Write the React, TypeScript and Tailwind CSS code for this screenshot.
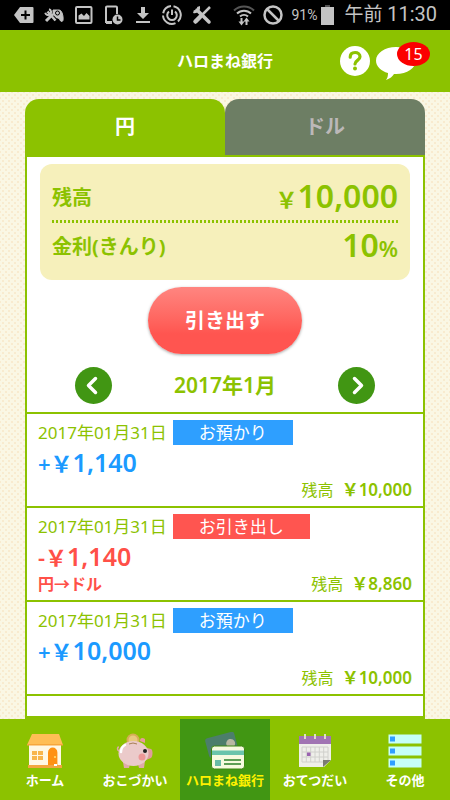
import type { ReactNode } from 'react'
import clsx from 'clsx'

type Entry = {
  date: string
  kind: 'in' | 'out'
  label: string
  amount: string
  note?: string
  balance: string
}

const entries: Entry[] = [
  { date: '2017年01月31日', kind: 'in', label: 'お預かり', amount: '1,140', balance: '10,000' },
  { date: '2017年01月31日', kind: 'out', label: 'お引き出し', amount: '1,140', note: '円→ドル', balance: '8,860' },
  { date: '2017年01月31日', kind: 'in', label: 'お預かり', amount: '10,000', balance: '10,000' },
]

function StatusBar() {
  return (
    <div className="flex h-[30px] items-center justify-between bg-black pr-[13px] pl-[14px] font-['Roboto','Noto_Sans_CJK_JP',sans-serif] text-[#c4c4c4]">
      <div className="flex items-center gap-[10px]">
        {/* tag with plus */}
        <svg width="20" height="18" viewBox="0 0 20 18">
          <path d="M6 1h12.5a1 1 0 0 1 1 1v14a1 1 0 0 1-1 1H6L0 9z" fill="currentColor" />
          <path d="M11.500 4.500v9M7 9h9" stroke="#000" strokeWidth="2" />
        </svg>
        {/* game pad with tools */}
        <svg width="20" height="18" viewBox="0 0 20 18" fill="none" stroke="currentColor">
          <path d="M9 4h6c2 0 3 2 3.700 5s.8 6.500-1 6.500-2-3.500-4-3.500H9z" fill="currentColor" />
          <circle cx="13.500" cy="7" r="2" stroke="#000" />
          <path d="M3 5.500l9 9.500" stroke="#000" strokeWidth="4.500" />
          <path d="M3.500 5.500l8 9" strokeWidth="2.500" />
          <path d="M2 15l7-7" strokeWidth="3" />
          <path d="M5 3.200a3 3 0 1 1-3.800 3.600" strokeWidth="2" />
        </svg>
        {/* picture */}
        <svg width="20" height="20" viewBox="0 0 20 20">
          <rect x="2" y="2" width="15.500" height="16" rx="1" fill="none" stroke="currentColor" strokeWidth="2" />
          <path d="M4.500 14.500v-4l3-2 2.500 2.500 2.500-3 3 3v3.500z" fill="currentColor" />
        </svg>
        {/* device with clock */}
        <svg width="20" height="20" viewBox="0 0 20 20" fill="none" stroke="currentColor">
          <path d="M13 9V2.500a1 1 0 0 0-1-1H3a1 1 0 0 0-1 1V17h6" strokeWidth="2" />
          <path d="M2 17.500h6" strokeWidth="3" />
          <circle cx="13.500" cy="14.500" r="5" fill="currentColor" stroke="none" />
          <path d="M13.500 11.500v3.500h3" stroke="#000" strokeWidth="1.500" />
        </svg>
        {/* download */}
        <svg width="18" height="18" viewBox="0 0 18 18" fill="currentColor">
          <path d="M7 1h4v6h4l-6 6-6-6h4zM2 15h14v2H2z" />
        </svg>
        {/* power ring */}
        <svg width="20" height="20" viewBox="0 0 20 20" fill="none" stroke="currentColor" strokeWidth="2">
          <path d="M11.500 1.200A9 9 0 0 1 16 16.500M13.500 18.200A9 9 0 0 1 1 10.500M1.200 8.200A9 9 0 0 1 9 1" />
          <path d="M7 6.500a4.800 4.800 0 1 0 6 0M10 4.500V10" />
        </svg>
        {/* wrench and screwdriver */}
        <svg width="20" height="20" viewBox="0 0 20 20" fill="none" stroke="currentColor">
          <path d="M5 5l12 12" strokeWidth="3.500" strokeLinecap="round" />
          <path d="M6.500 1.500a4 4 0 0 1-5 5" strokeWidth="3" />
          <path d="M18 2L9 11" strokeWidth="2.500" />
          <path d="M8 12L3.500 16.500" strokeWidth="4.500" strokeLinecap="round" />
        </svg>
      </div>
      <div className="flex items-center">
        <svg className="mr-2" width="22" height="22" viewBox="0 0 22 22" fill="none" stroke="currentColor" strokeWidth="2">
          <path d="M1 6.500a14.500 14.500 0 0 1 20 0" stroke="#555" />
          <path d="M4 9.500a10 10 0 0 1 14 0M7 12.500a6 6 0 0 1 8 0" />
          <path d="M8.500 14v5M13.500 21v-5" />
          <path d="M5.500 17.500h6l-3 4zM10.500 17.500h6l-3-4z" fill="currentColor" stroke="none" />
        </svg>
        <svg className="mr-2" width="20" height="20" viewBox="0 0 20 20" fill="none" stroke="currentColor" strokeWidth="2.500">
          <circle cx="10" cy="10" r="8.500" />
          <path d="M4 4l12 12" />
        </svg>
        <span className="mr-1 text-sm">91%</span>
        <svg className="mr-[10px]" width="13" height="20" viewBox="0 0 13 20">
          <path d="M4 0h5v3H4z" fill="#555" />
          <path d="M0 2h13v18H0z" fill="currentColor" />
        </svg>
        <span className="text-[19px] leading-[30px] whitespace-nowrap">午前 <span className="text-xl">11:30</span></span>
      </div>
    </div>
  )
}

function Header() {
  return (
    <header className="relative flex h-[62px] items-center justify-center bg-[#8cc200]">
      <h1 className="text-base font-bold text-white">ハロまね銀行</h1>
      <div className="absolute top-3 right-5 flex gap-[6px]">
        <button aria-label="ヘルプ" className="mt-1 size-[30px]">
          <svg width="30" height="30" viewBox="0 0 30 30">
            <circle cx="15" cy="15" r="15" fill="#fff" />
            <path d="M10.200 11.200c0-3.200 2-4.700 4.900-4.700 2.800 0 4.900 1.600 4.900 4.200 0 3.600-5 3.700-5 7.300" fill="none" stroke="#8cc200" strokeWidth="3.200" strokeLinecap="round" />
            <circle cx="15" cy="22.500" r="2" fill="#8cc200" />
          </svg>
        </button>
        <button aria-label="お知らせ 15" className="relative h-10 w-[54px]">
          <svg width="40" height="34" viewBox="0 0 40 34" className="mt-1">
            <path d="M20 0C9 0 0 6 0 13.500c0 6 5 10.500 12 12.500 0 3-.5 5-2 7 4-1.500 6.500-3.500 8-6h2c11 0 20-6 20-13.500S31 0 20 0z" fill="#fff" />
          </svg>
          <span className="absolute top-0 right-0 flex h-6 w-[33px] items-center justify-center rounded-[50%] bg-[#fb0000] text-base text-white">15</span>
        </button>
      </div>
    </header>
  )
}

function Tabs() {
  return (
    <div role="tablist" className="grid h-14 grid-cols-2 text-xl font-bold">
      <button role="tab" aria-selected="true" className="rounded-t-[14px] bg-[#8cc200] text-white">円</button>
      <button role="tab" aria-selected="false" className="rounded-t-[14px] bg-[#6d7e64] text-[#bcb8b8]">ドル</button>
    </div>
  )
}

function Summary() {
  return (
    <dl className="mx-[13px] mt-[7px] h-[116px] rounded-xl bg-[#f6f0bb] px-3 pt-3">
      <div className="flex h-11 items-center justify-between">
        <dt className="text-xl font-bold">残高</dt>
        <dd className="pb-[2px] text-[32px] leading-10 font-semibold"><span className="text-[22px]">￥</span>10,000</dd>
      </div>
      <svg className="block h-[3px] w-full" aria-hidden="true">
        <line x1="0" y1="1.500" x2="100%" y2="1.500" stroke="#8cc200" strokeWidth="3" strokeDasharray="2 2" />
      </svg>
      <div className="flex h-12 items-center justify-between">
        <dt className="text-xl font-bold">金利(きんり)</dt>
        <dd className="pb-[2px] text-[32px] leading-10 font-semibold">10<span className="text-[22px]">%</span></dd>
      </div>
    </dl>
  )
}

function MonthButton({ label, d }: { label: string; d: string }) {
  return (
    <button aria-label={label} className="flex size-[37px] items-center justify-center rounded-full bg-[#419613]">
      <svg width="37" height="37" viewBox="0 0 37 37" fill="none" stroke="#fff" strokeWidth="3.500" strokeLinecap="round" strokeLinejoin="round">
        <path d={d} />
      </svg>
    </button>
  )
}

function EntryRow({ entry }: { entry: Entry }) {
  const isIn = entry.kind === 'in'
  return (
    <li className="h-[94px] border-b-2 border-[#8cc200] px-[11px] pt-[6px]">
      <div className="flex items-center gap-[6px] text-[17px] leading-[25px]">
        <time>{entry.date}</time>
        <span className={clsx('px-[26px] text-white', isIn ? 'bg-[#2e9fff]' : 'bg-[#ff5550]')}>{entry.label}</span>
      </div>
      <p className={clsx('text-[25px] leading-[34px] font-semibold', isIn ? 'text-[#1b9aff]' : 'text-[#ff5048]')}>
        <span className="text-[22px]">{isIn ? '+' : '-'}￥</span>{entry.amount}
      </p>
      <div className="flex items-center justify-between text-base leading-5">
        <span className="font-bold text-[#ff5048]">{entry.note}</span>
        <span>残高<b className="ml-2 text-[17px] font-semibold">￥{entry.balance}</b></span>
      </div>
    </li>
  )
}

function HomeIcon() {
  return (
    <svg width="38" height="36" viewBox="0 0 38 36">
      <path d="M3 12h32v21H3z" fill="#fff8e4" />
      <path d="M6 1h27l4 11H1z" fill="#ffbe55" />
      <path d="M1 11h36v1.500H1z" fill="#f6a63c" />
      <path d="M6 18h11v9H6z" fill="#f8b64c" />
      <path d="M11.500 18v9M6 22.500h11" stroke="#fff8e4" />
      <path d="M22 32V19.500a4.700 5 0 0 1 9.400 0V32z" fill="#ff9113" />
      <circle cx="29" cy="24" r="1" fill="#ffe070" />
      <path d="M2 32h34v3H2z" fill="#f3a63d" />
      <path d="M28 31h3v2h-3z" fill="#fff" />
    </svg>
  )
}

function PigIcon() {
  return (
    <svg width="38" height="36" viewBox="0 0 38 36">
      <circle cx="17" cy="7" r="6.500" fill="#d6ad56" />
      <circle cx="17" cy="7" r="4.500" fill="#e8c980" />
      <path d="M3 18c-2-1-2-4 0-4" fill="none" stroke="#dfa9a6" strokeWidth="1.500" />
      <path d="M7 29l1 6h5l1-4h8l1 4h5l1-7z" fill="#dfabaa" />
      <path d="M24 8c0-3 2-4 5-2v4z" fill="#e89b9c" />
      <path d="M31 15l4 1c2 1 2 7 0 9l-5 2z" fill="#df9c9c" />
      <ellipse cx="17.500" cy="20.500" rx="15" ry="12.500" fill="#ebcaca" />
      <path d="M5 19c0-3 2-6 4-7" stroke="#fff" strokeWidth="2.500" strokeLinecap="round" fill="none" />
      <circle cx="26" cy="24" r="3.500" fill="#ed9797" />
      <circle cx="29" cy="18" r="2" fill="#222" />
      <path d="M13 11q4-2 8 0" stroke="#a87f55" fill="none" />
    </svg>
  )
}

function CardsIcon() {
  return (
    <svg width="42" height="38" viewBox="0 0 42 38">
      <g transform="rotate(-15 17 14)">
        <rect x="3" y="3" width="30" height="20" rx="2.500" fill="#4c7e6b" />
        <circle cx="27" cy="14" r="4.500" fill="#b8b8a2" />
      </g>
      <rect x="7.500" y="14" width="33" height="23" rx="3" fill="#f7fadf" stroke="#3c8612" />
      <path d="M8 18.500h32v4.500H8z" fill="#6ac4ab" />
      <rect x="11" y="28" width="6" height="6" fill="#68bba6" />
      <path d="M20 28h17M20 32h17" stroke="#2c8028" strokeWidth="1.500" />
    </svg>
  )
}

function CalendarIcon() {
  return (
    <svg width="34" height="34" viewBox="0 0 34 34">
      <path d="M1 2h32v24l-7 7H1z" fill="#efefea" />
      <path d="M1 2h32v8H1z" fill="#a174b3" />
      <path d="M7 0v5M17 0v5M27 0v5" stroke="#dcdcc8" strokeWidth="2" />
      <path d="M4 13h26v15H4zM4 18h26M4 23h26M8.300 13v15M12.700 13v15M17 13v15M21.300 13v15M25.700 13v15" fill="none" stroke="#d0d0cc" />
      <path d="M9 18.500h3.500v3.500H9z" fill="#9a62b0" />
      <path d="M25 33v-7h8z" fill="#7b7b73" />
    </svg>
  )
}

function ListIcon() {
  return (
    <svg width="34" height="34" viewBox="0 0 34 34">
      {[0.5, 12.5, 24.5].map((y) => (
        <g key={y}>
          <rect x="0.500" y={y} width="33" height="9" fill="#c6fff8" />
          <rect x="2" y={y + 2} width="5" height="5" fill="#2f9fff" />
        </g>
      ))}
    </svg>
  )
}

const navItems: { label: string; icon: ReactNode; active?: boolean }[] = [
  { label: 'ホーム', icon: <HomeIcon /> },
  { label: 'おこづかい', icon: <PigIcon /> },
  { label: 'ハロまね銀行', icon: <CardsIcon />, active: true },
  { label: 'おてつだい', icon: <CalendarIcon /> },
  { label: 'その他', icon: <ListIcon /> },
]

function BottomNav() {
  return (
    <nav className="grid grid-cols-5 bg-[#8cc200]">
      {navItems.map((item) => (
        <a
          key={item.label}
          href="#"
          className={clsx(
            'flex h-[81px] flex-col items-center pt-[13px] text-[13px] leading-5 font-bold whitespace-nowrap',
            item.active ? 'bg-[#419613] text-[#fff100]' : 'text-white',
          )}
        >
          <span className="flex h-[38px] items-center">{item.icon}</span>
          {item.label}
        </a>
      ))}
    </nav>
  )
}

export default function App() {
  return (
    <div className="flex min-h-screen flex-col bg-[#faf7e4] font-['Noto_Sans','Noto_Sans_CJK_JP',sans-serif] text-[#8cc200]">
      <StatusBar />
      <Header />
      <main className="flex flex-1 flex-col bg-[radial-gradient(#f8ebcf_1px,transparent_1.5px),radial-gradient(#f8ebcf_1px,transparent_1.5px)] bg-[length:6px_6px] bg-[position:0_0,3px_3px] px-[25px] pt-[7px]">
        <Tabs />
        <section className="flex-1 border-2 border-b-[3px] border-[#8cc200] bg-white">
          <Summary />
          <div className="mt-[7px] flex justify-center">
            <button className="h-[67px] w-[154px] rounded-full bg-linear-to-b from-[#ff8580] to-[#ff5550] to-70% text-xl font-bold text-white shadow-[0_1px_3px_rgba(0,0,0,0.35)]">
              引き出す
            </button>
          </div>
          <div className="mt-[13px] flex items-center justify-between px-12">
            <MonthButton label="前の月" d="M20.500 11.500l-7 7 7 7" />
            <h2 className="text-[21px] leading-[37px] font-semibold">2017年1月</h2>
            <MonthButton label="次の月" d="M16.500 11.500l7 7-7 7" />
          </div>
          <ul className="mt-2 border-t-2 border-[#8cc200]">
            {entries.map((entry, i) => (
              <EntryRow key={i} entry={entry} />
            ))}
          </ul>
        </section>
      </main>
      <BottomNav />
    </div>
  )
}
